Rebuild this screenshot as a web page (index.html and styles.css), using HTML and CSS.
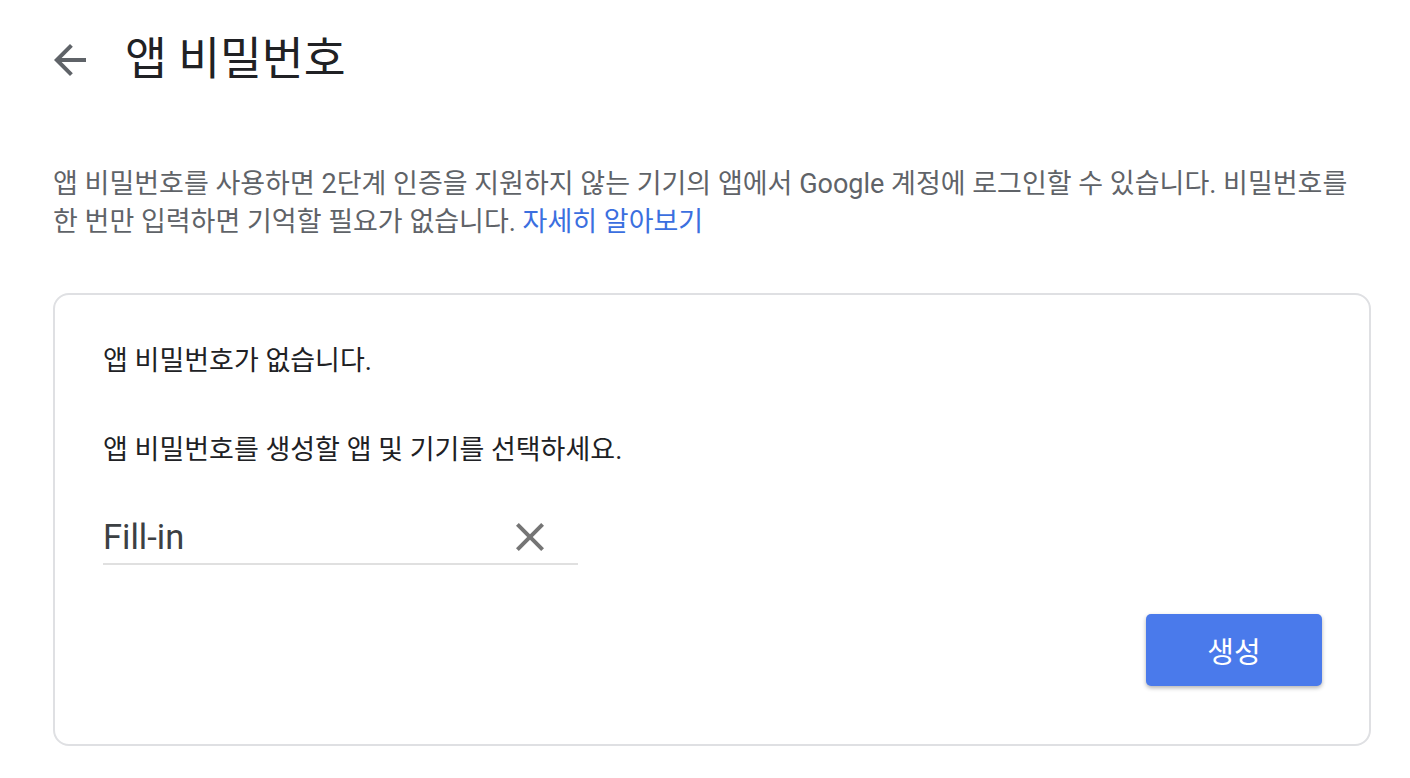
FILE: index.html
```html
<!DOCTYPE html>
<html>
<head>
    <title>앱 비밀번호</title>
    <link rel="stylesheet" href="styles.css">
</head>
<body>
    <div class="page">
        <div class="header">
            <span class="back-button">
                <svg width="48" height="48" viewBox="0 0 24 24"><path d="M20 11H7.83l5.59-5.59L12 4l-8 8 8 8 1.41-1.41L7.83 13H20v-2z" fill="#5f6368"/></svg>
            </span>
            <h1 class="title">앱 비밀번호</h1>
        </div>

        <p class="intro">앱 비밀번호를 사용하면 2단계 인증을 지원하지 않는 기기의 앱에서 Google 계정에 로그인할 수 있습니다. 비밀번호를 한 번만 입력하면 기억할 필요가 없습니다. <a class="link" href="#">자세히 알아보기</a></p>

        <div class="card">
            <p class="card-text">앱 비밀번호가 없습니다.</p>
            <p class="card-text select-text">앱 비밀번호를 생성할 앱 및 기기를 선택하세요.</p>
            <div class="field">
                <span class="field-value">Fill-in</span>
                <span class="clear-button">
                    <svg width="48" height="48" viewBox="0 0 24 24"><path d="M19 6.41L17.59 5 12 10.59 6.41 5 5 6.41 10.59 12 5 17.59 6.41 19 12 13.41 17.59 19 19 17.59 13.41 12z" fill="#757575"/></svg>
                </span>
            </div>
            <button class="generate-button">생성</button>
        </div>
    </div>
</body>
</html>
```

FILE: styles.css
```css
body {
    font-family: Roboto, "Noto Sans CJK KR", sans-serif;
    background-color: #fff;
    margin: 0;
}
.page {
    padding: 36px 39px 0 53px;
}
.header {
    display: flex;
    align-items: center;
    height: 48px;
    margin-left: -7px;
}
.back-button {
    display: flex;
    width: 48px;
    height: 48px;
}
.title {
    margin: 0 0 0 31px;
    font-size: 45.5px;
    font-weight: normal;
    color: #202124;
    line-height: 48px;
}
.intro {
    margin: 81px 0 0 0;
    font-size: 27px;
    line-height: 38px;
    color: #5f6368;
    word-break: keep-all;
}
.link {
    display: inline-block;
    color: #3b6fdf;
    text-decoration: none;
}
.card {
    display: flex;
    flex-direction: column;
    margin-top: 52px;
    padding: 48px 47px 58px 48px;
    border: 2px solid #dfe0e3;
    border-radius: 16px;
}
.card-text {
    margin: 0;
    font-size: 27px;
    line-height: 36px;
    color: #202124;
}
.select-text {
    margin-top: 53px;
}
.field {
    display: flex;
    align-items: center;
    width: 475px;
    height: 48px;
    margin-top: 45px;
    padding-bottom: 2px;
    border-bottom: 2px solid #e0e0e0;
}
.field-value {
    flex: 1;
    font-size: 34.5px;
    color: #3c4043;
}
.clear-button {
    display: flex;
    width: 48px;
    height: 48px;
    margin-right: 24px;
}
.generate-button {
    align-self: flex-end;
    width: 176px;
    height: 72px;
    margin-top: 49px;
    border: none;
    border-radius: 5px;
    background-color: #4a7aeb;
    color: #fff;
    font-family: Roboto, "Noto Sans CJK KR", sans-serif;
    font-size: 29px;
    box-shadow: 0 2px 4px rgba(0, 0, 0, 0.3);
    cursor: pointer;
}
```
